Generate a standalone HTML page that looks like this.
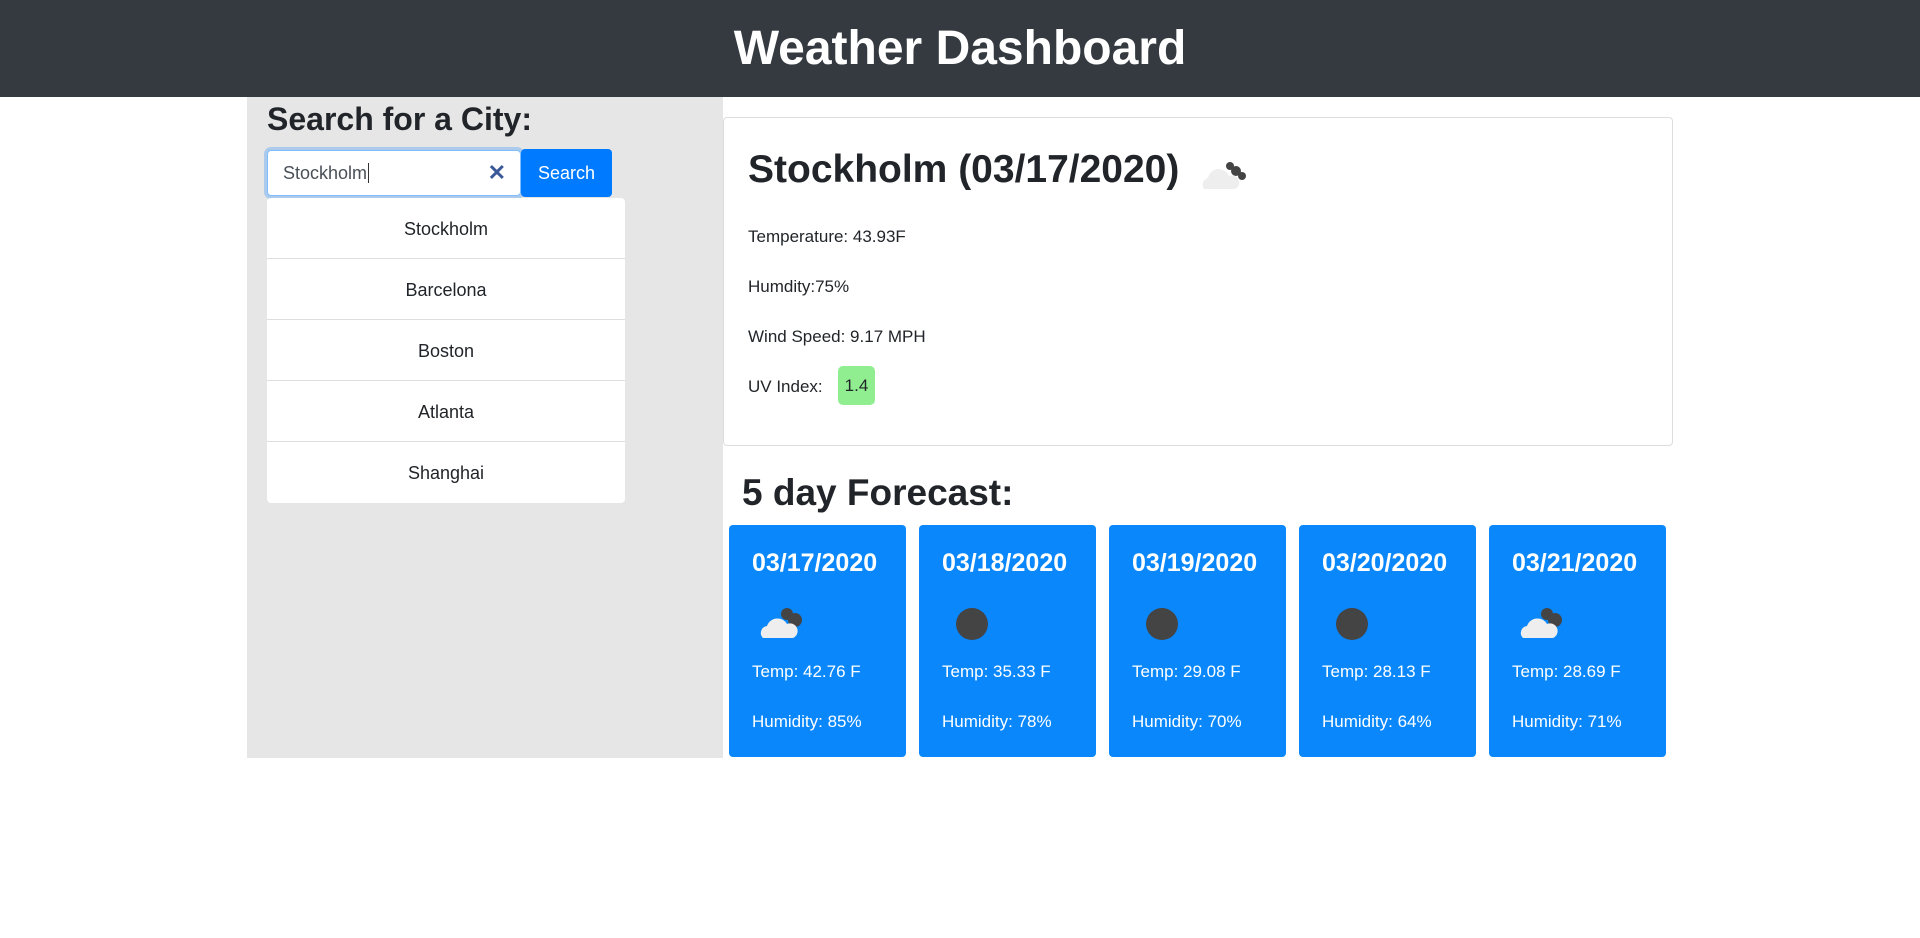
<!DOCTYPE html>
<html><head><meta charset="utf-8"><style>
*{box-sizing:border-box;margin:0;padding:0}
body{width:1920px;height:938px;background:#fff;font-family:"Liberation Sans",sans-serif;color:#212529;position:relative;overflow:hidden}
.hdr{position:absolute;left:0;top:0;width:1920px;height:97px;background:#343a40;color:#fff;font-weight:bold;font-size:48px;text-align:center;line-height:97px}
.side{position:absolute;left:247px;top:97px;width:476px;height:661px;background:#e6e6e6}
.abs{position:absolute}
h2{font-weight:bold}
.inp{left:267px;top:150px;width:254px;height:46px;background:#fff;border:1px solid #80bdff;border-radius:4px;box-shadow:0 0 0 3px rgba(0,123,255,.25);font-size:18px;color:#495057;padding-left:15px;line-height:44px}
.btn{left:521px;top:149px;width:91px;height:48px;background:#007bff;border-radius:4px;color:#fff;font-size:18px;text-align:center;line-height:48px}
.list{left:267px;top:198px;width:358px;background:#fff;border-radius:4px}
.list div{height:61px;line-height:62px;text-align:center;font-size:18px;border-bottom:1px solid #dedede}
.list div:last-child{border-bottom:none}
.card{left:723px;top:117px;width:950px;height:329px;border:1px solid #ddd;border-radius:4px;background:#fff}
.p{left:748px;font-size:17px}
.fc{top:525px;width:177px;height:232px;background:#0a88fb;border-radius:4px;color:#fff}
.fc .d{position:absolute;left:23px;top:24px;font-size:25px;font-weight:bold}
.fc .t{position:absolute;left:23px;top:137px;font-size:17px}
.fc .h{position:absolute;left:23px;top:187px;font-size:17px}
.fc .dot{position:absolute;left:37px;top:83px;width:32px;height:32px;border-radius:50%;background:#444}
</style></head><body>
<div class="hdr">Weather Dashboard</div>
<div class="side"></div>
<h2 class="abs" style="left:267px;top:101px;font-size:32px">Search for a City:</h2>
<div class="abs inp">Stockholm<span style="border-left:1px solid #333;margin-left:1px"></span><span style="position:absolute;right:14px;top:0;color:#3b5998;font-weight:bold;font-size:22px">✕</span></div>
<div class="abs btn">Search</div>
<div class="abs list"><div>Stockholm</div><div>Barcelona</div><div>Boston</div><div>Atlanta</div><div>Shanghai</div></div>
<div class="abs card"></div>
<h2 class="abs" style="left:748px;top:148px;font-size:39px">Stockholm (03/17/2020)</h2>
<svg class="abs" style="left:1200px;top:158px" width="50" height="34" viewBox="0 0 50 34"><circle cx="30" cy="8" r="4" fill="#444"/><circle cx="36" cy="13" r="5" fill="#444"/><circle cx="42" cy="18" r="4" fill="#444"/><path d="M4 31 a7 7 0 0 1 4-11 a11 11 0 0 1 21-2 a7 7 0 0 1 6 13z" fill="#eee"/></svg>
<div class="abs p" style="top:227px">Temperature: 43.93F</div>
<div class="abs p" style="top:277px">Humdity:75%</div>
<div class="abs p" style="top:327px">Wind Speed: 9.17 MPH</div>
<div class="abs p" style="top:377px">UV Index:</div>
<div class="abs" style="left:838px;top:366px;width:37px;height:39px;background:#90ee90;border-radius:5px;font-size:17px;text-align:center;line-height:39px">1.4</div>
<h2 class="abs" style="left:742px;top:472px;font-size:37px">5 day Forecast:</h2>
<div class="abs fc" style="left:729px"><div class="d">03/17/2020</div><svg style="position:absolute;left:30px;top:80px" width="48" height="36" viewBox="0 0 48 36"><circle cx="28" cy="9" r="6" fill="#444"/><circle cx="36" cy="15" r="7" fill="#444"/><path d="M4 33 a7 7 0 0 1 4-12 a11 11 0 0 1 20-2 a7 7 0 0 1 6 14z" fill="#eee"/></svg><div class="t">Temp: 42.76 F</div><div class="h">Humidity: 85%</div></div>
<div class="abs fc" style="left:919px"><div class="d">03/18/2020</div><div class="dot"></div><div class="t">Temp: 35.33 F</div><div class="h">Humidity: 78%</div></div>
<div class="abs fc" style="left:1109px"><div class="d">03/19/2020</div><div class="dot"></div><div class="t">Temp: 29.08 F</div><div class="h">Humidity: 70%</div></div>
<div class="abs fc" style="left:1299px"><div class="d">03/20/2020</div><div class="dot"></div><div class="t">Temp: 28.13 F</div><div class="h">Humidity: 64%</div></div>
<div class="abs fc" style="left:1489px"><div class="d">03/21/2020</div><svg style="position:absolute;left:30px;top:80px" width="48" height="36" viewBox="0 0 48 36"><circle cx="28" cy="9" r="6" fill="#444"/><circle cx="36" cy="15" r="7" fill="#444"/><path d="M4 33 a7 7 0 0 1 4-12 a11 11 0 0 1 20-2 a7 7 0 0 1 6 14z" fill="#eee"/></svg><div class="t">Temp: 28.69 F</div><div class="h">Humidity: 71%</div></div>
</body></html>
